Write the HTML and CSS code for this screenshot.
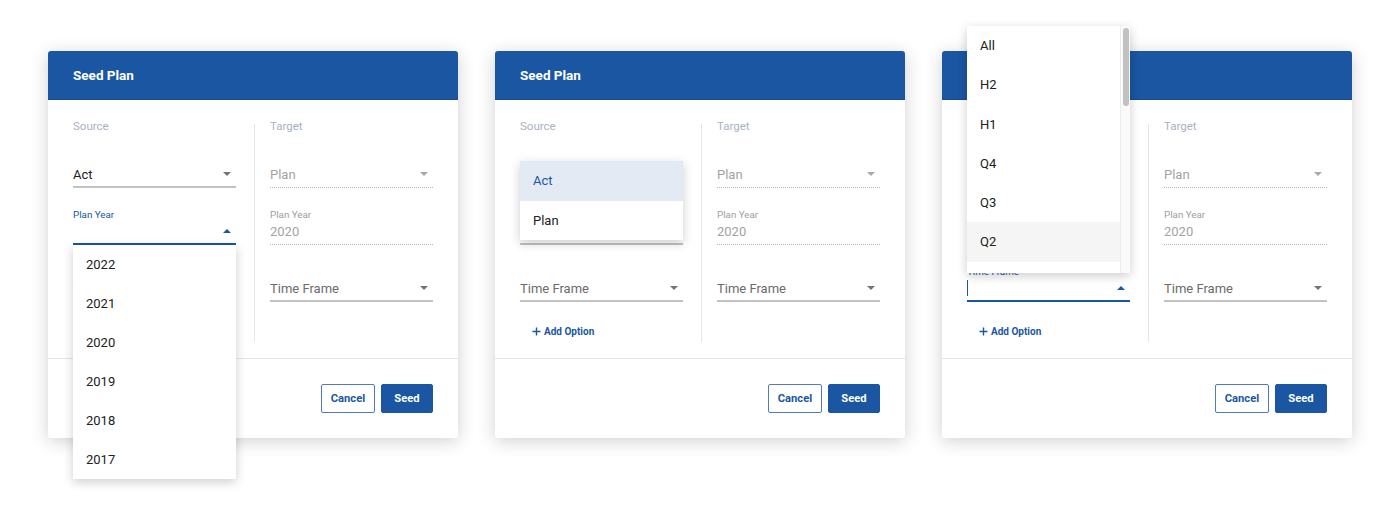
FILE: index.html
```html
<!DOCTYPE html>
<html lang="en">

<head>
    <meta charset="UTF-8">
    <meta name="viewport" content="width=device-width, initial-scale=1.0">
    <title>Seed Plan</title>
    <link rel="stylesheet" href="styles.css">
</head>

<body>
    <!-- 1: plan year open -->
    <div class="dialog">
        <div class="dialog-head">Seed Plan</div>
        <div class="dialog-body">
            <div class="col">
                <div class="col-label">Source</div>
                <div class="field bare">
                    <div class="field-row"><span class="value">Act</span><i class="caret"></i></div>
                </div>
                <div class="field active">
                    <span class="field-label">Plan Year</span>
                    <div class="field-row"><span class="value"></span><i class="caret up"></i></div>
                    <ul class="menu menu-year">
                        <li>2022</li>
                        <li>2021</li>
                        <li>2020</li>
                        <li>2019</li>
                        <li>2018</li>
                        <li>2017</li>
                    </ul>
                </div>
                <div class="field bare">
                    <div class="field-row"><span class="value placeholder">Time Frame</span><i class="caret"></i></div>
                </div>
                <a href="" class="add-option"><svg width="9" height="9" viewBox="0 0 9 9"><path d="M4.5 0.5v8M0.5 4.5h8" /></svg>Add Option</a>
            </div>
            <div class="divider"></div>
            <div class="col">
                <div class="col-label">Target</div>
                <div class="field bare disabled">
                    <div class="field-row"><span class="value">Plan</span><i class="caret"></i></div>
                </div>
                <div class="field disabled">
                    <span class="field-label">Plan Year</span>
                    <div class="field-row"><span class="value">2020</span></div>
                </div>
                <div class="field bare">
                    <div class="field-row"><span class="value placeholder">Time Frame</span><i class="caret"></i></div>
                </div>
            </div>
        </div>
        <div class="dialog-foot">
            <button class="btn btn-outline">Cancel</button>
            <button class="btn btn-primary">Seed</button>
        </div>
    </div>

    <!-- 2: source open -->
    <div class="dialog">
        <div class="dialog-head">Seed Plan</div>
        <div class="dialog-body">
            <div class="col">
                <div class="col-label">Source</div>
                <div class="field bare">
                    <div class="field-row"><span class="value">Act</span><i class="caret"></i></div>
                    <ul class="menu menu-source">
                        <li class="selected">Act</li>
                        <li>Plan</li>
                    </ul>
                </div>
                <div class="field">
                    <span class="field-label">Plan Year</span>
                    <div class="field-row"><span class="value">2022</span><i class="caret"></i></div>
                </div>
                <div class="field bare">
                    <div class="field-row"><span class="value placeholder">Time Frame</span><i class="caret"></i></div>
                </div>
                <a href="" class="add-option"><svg width="9" height="9" viewBox="0 0 9 9"><path d="M4.5 0.5v8M0.5 4.5h8" /></svg>Add Option</a>
            </div>
            <div class="divider"></div>
            <div class="col">
                <div class="col-label">Target</div>
                <div class="field bare disabled">
                    <div class="field-row"><span class="value">Plan</span><i class="caret"></i></div>
                </div>
                <div class="field disabled">
                    <span class="field-label">Plan Year</span>
                    <div class="field-row"><span class="value">2020</span></div>
                </div>
                <div class="field bare">
                    <div class="field-row"><span class="value placeholder">Time Frame</span><i class="caret"></i></div>
                </div>
            </div>
        </div>
        <div class="dialog-foot">
            <button class="btn btn-outline">Cancel</button>
            <button class="btn btn-primary">Seed</button>
        </div>
    </div>

    <!-- 3: time frame open -->
    <div class="dialog">
        <div class="dialog-head">Seed Plan</div>
        <div class="dialog-body">
            <div class="col">
                <div class="col-label">Source</div>
                <div class="field bare">
                    <div class="field-row"><span class="value">Act</span><i class="caret"></i></div>
                </div>
                <div class="field">
                    <span class="field-label">Plan Year</span>
                    <div class="field-row"><span class="value">2022</span><i class="caret"></i></div>
                </div>
                <div class="field active">
                    <span class="field-label">Time Frame</span>
                    <div class="field-row"><span class="value"><i class="text-cursor"></i></span><i class="caret up"></i></div>
                    <div class="menu menu-time">
                        <ul>
                            <li>All</li>
                            <li>H2</li>
                            <li>H1</li>
                            <li>Q4</li>
                            <li>Q3</li>
                            <li class="hover">Q2</li>
                            <li>Q1</li>
                        </ul>
                        <div class="scroll-track"><div class="scroll-thumb"></div></div>
                    </div>
                </div>
                <a href="" class="add-option"><svg width="9" height="9" viewBox="0 0 9 9"><path d="M4.5 0.5v8M0.5 4.5h8" /></svg>Add Option</a>
            </div>
            <div class="divider"></div>
            <div class="col">
                <div class="col-label">Target</div>
                <div class="field bare disabled">
                    <div class="field-row"><span class="value">Plan</span><i class="caret"></i></div>
                </div>
                <div class="field disabled">
                    <span class="field-label">Plan Year</span>
                    <div class="field-row"><span class="value">2020</span></div>
                </div>
                <div class="field bare">
                    <div class="field-row"><span class="value placeholder">Time Frame</span><i class="caret"></i></div>
                </div>
            </div>
        </div>
        <div class="dialog-foot">
            <button class="btn btn-outline">Cancel</button>
            <button class="btn btn-primary">Seed</button>
        </div>
    </div>
</body>

</html>
```

FILE: styles.css
```css
* {
    box-sizing: border-box;
}

html {
    background: #fff;
}

body {
    margin: 0;
    min-height: 507px;
    padding: 51px 0 0 48px;
    display: flex;
    align-items: flex-start;
    gap: 37px;
    background: #fff;
    font-family: Roboto, "Liberation Sans", sans-serif;
    color: #212121;
}

.dialog {
    flex: none;
    width: 410px;
    height: 387px;
    background: #fff;
    border-radius: 3px;
    box-shadow: 0 3px 18px rgba(0, 0, 0, 0.19);
}

.dialog-head {
    height: 49px;
    line-height: 49px;
    padding-left: 25px;
    background: #1a56a2;
    border-bottom: 1px solid #164b8f;
    border-radius: 3px 3px 0 0;
    color: #fff;
    font-size: 13.5px;
    font-weight: bold;
}

.dialog-body {
    height: 259px;
    padding: 21px 25px 0;
    display: flex;
    border-bottom: 1px solid #e6e6e6;
}

.col {
    width: 163px;
}

.divider {
    width: 1px;
    height: 218px;
    margin: 3px 15px 0 18px;
    background: #e6e6e6;
}

.col-label {
    height: 10px;
    line-height: 10px;
    font-size: 11.5px;
    color: #a9b1bf;
}

.field {
    position: relative;
    height: 57px;
    padding-top: 21px;
    border-bottom: 2px solid #c2c2c2;
}

.field.bare {
    padding-top: 33px;
}

.field-label {
    display: block;
    height: 12px;
    line-height: 12px;
    font-size: 9.8px;
    color: #9e9e9e;
}

.field-row {
    height: 20px;
    display: flex;
    align-items: center;
    justify-content: space-between;
    padding-right: 5px;
    font-size: 13px;
}

.value.placeholder {
    color: #6b6b6b;
}

.caret {
    width: 0;
    height: 0;
    border-left: 4.5px solid transparent;
    border-right: 4.5px solid transparent;
    border-top: 4px solid #757575;
}

.caret.up {
    border-top: none;
    border-bottom: 4px solid #1a56a2;
}

.field.disabled {
    border-bottom: 1px dotted #b5b5b5;
}

.field.disabled .value {
    color: #a3a3a3;
}

.field.disabled .caret {
    border-top-color: #a8a8a8;
}

.field.active {
    border-bottom: 2px solid #1a56a2;
}

.field.active .field-label {
    color: #1a56a2;
}

.text-cursor {
    display: block;
    width: 1px;
    height: 16px;
    background: #1a56a2;
}

.add-option {
    display: flex;
    align-items: center;
    gap: 3px;
    margin: 22px 0 0 12px;
    height: 14px;
    font-size: 10px;
    font-weight: bold;
    color: #1a56a2;
    text-decoration: none;
}

.add-option svg path {
    stroke: #1a56a2;
    stroke-width: 1.4;
}

/* dropdown menus */
.menu {
    position: absolute;
    left: 0;
    width: 163px;
    margin: 0;
    padding: 0;
    list-style: none;
    background: #fff;
    box-shadow: 0 3px 10px rgba(0, 0, 0, 0.2);
    z-index: 5;
}

.menu ul {
    margin: 0;
    padding: 0;
    list-style: none;
}

.menu li {
    padding-left: 13px;
    font-size: 13px;
    color: #212121;
}

.menu-year {
    top: 57px;
}

.menu-year li {
    height: 39px;
    line-height: 39px;
}

.menu-source {
    top: 30px;
}

.menu-source li {
    height: 39.5px;
    line-height: 39.5px;
}

.menu-source li.selected {
    background: #e3eaf4;
    color: #1a56a2;
}

.menu-time {
    top: -219px;
    height: 247px;
    overflow: hidden;
    display: flex;
}

.menu-time ul {
    flex: 1;
}

.menu-time li {
    height: 39.3px;
    line-height: 39.3px;
}

.menu-time li.hover {
    background: #f5f5f5;
}

.scroll-track {
    width: 10px;
    padding: 2px 0 0 2px;
    background: #fafafa;
    border-left: 1px solid #ececec;
}

.scroll-thumb {
    width: 6px;
    height: 78px;
    border-radius: 3px;
    background: #c1c1c1;
}

/* footer */
.dialog-foot {
    height: 79px;
    padding: 25px 25px 0;
    display: flex;
    justify-content: flex-end;
    align-items: flex-start;
    gap: 6px;
}

.btn {
    height: 29px;
    border-radius: 2px;
    font-family: Roboto, "Liberation Sans", sans-serif;
    font-size: 11.2px;
    font-weight: bold;
    padding: 0;
}

.btn-outline {
    width: 54px;
    background: #fff;
    border: 1px solid #4f7bbd;
    color: #1a56a2;
}

.btn-primary {
    width: 52px;
    background: #1a56a2;
    border: 1px solid #1a56a2;
    color: #fff;
}
```
